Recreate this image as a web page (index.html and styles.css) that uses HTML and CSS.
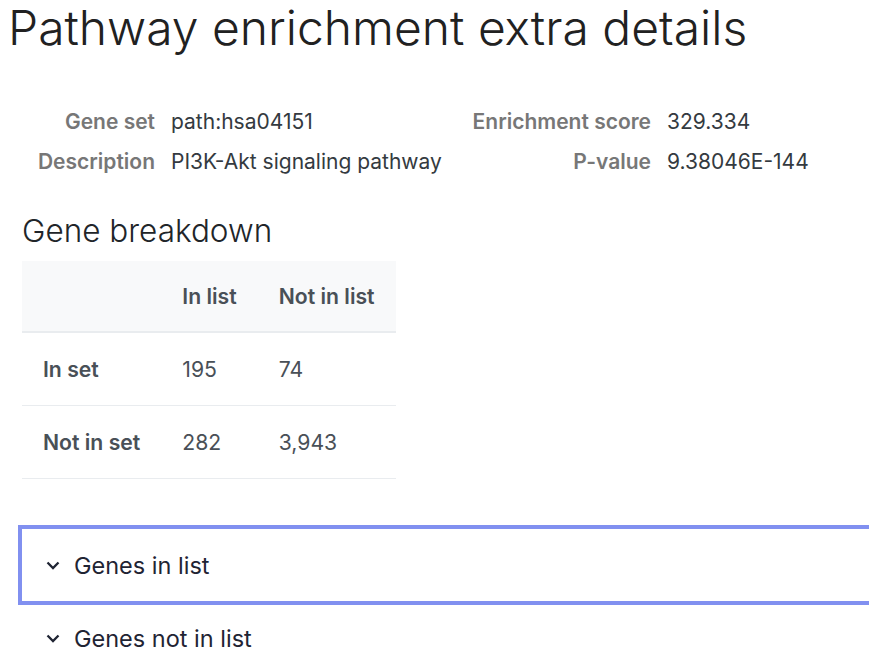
FILE: index.html
```html
<!DOCTYPE html>
<html lang="en">
<head>
<meta charset="utf-8">
<title>Pathway enrichment extra details</title>
<link rel="stylesheet" href="styles.css">
</head>
<body>
<div class="page">
  <h1 class="title">Pathway enrichment extra details</h1>

  <dl class="details">
    <dt>Gene set</dt><dd>path:hsa04151</dd>
    <dt>Enrichment score</dt><dd>329.334</dd>
    <dt>Description</dt><dd>PI3K-Akt signaling pathway</dd>
    <dt>P-value</dt><dd>9.38046E-144</dd>
  </dl>

  <section class="breakdown">
    <h2 class="subtitle">Gene breakdown</h2>
    <table class="matrix">
      <thead>
        <tr><th></th><th>In list</th><th>Not in list</th></tr>
      </thead>
      <tbody>
        <tr><th>In set</th><td>195</td><td>74</td></tr>
        <tr><th>Not in set</th><td>282</td><td>3,943</td></tr>
      </tbody>
    </table>
  </section>

  <div class="accordion">
    <div class="acc-item">
      <button class="acc-btn focused">
        <svg class="chev" width="14" height="9" viewBox="0 0 14 9"><polyline points="1.5,1.5 7,7 12.5,1.5" fill="none" stroke="#1f2433" stroke-width="2.3"/></svg>
        <span>Genes in list</span>
      </button>
    </div>
    <div class="acc-item">
      <button class="acc-btn">
        <svg class="chev" width="14" height="9" viewBox="0 0 14 9"><polyline points="1.5,1.5 7,7 12.5,1.5" fill="none" stroke="#1f2433" stroke-width="2.3"/></svg>
        <span>Genes not in list</span>
      </button>
    </div>
  </div>
</div>
</body>
</html>
```

FILE: styles.css
```css
html, body {
  margin: 0;
  padding: 0;
  background: #ffffff;
  overflow: hidden;
}

.page {
  width: 869px;
  font-family: "Inter", "Noto Sans", sans-serif;
  color: #343a40;
}

.title {
  margin: 0;
  padding-left: 8px;
  font-family: "Inter", "Noto Sans", sans-serif;
  font-weight: 300;
  font-size: 48px;
  line-height: 56px;
  color: #212121;
}

.details {
  margin: 46px 0 0 22px;
  display: grid;
  grid-template-columns: 133px 272px 192px auto;
  column-gap: 16px;
  font-size: 21px;
  line-height: 40px;
}

.details dt {
  text-align: right;
  font-weight: 600;
  color: #777777;
  white-space: nowrap;
}

.details dd {
  margin: 0;
  color: #343a40;
  white-space: nowrap;
}

.breakdown {
  margin: 29px 0 0 22px;
}

.subtitle {
  margin: 0;
  font-weight: 300;
  font-size: 31.5px;
  line-height: 40px;
  color: #212529;
}

.matrix {
  margin-top: 10px;
  border-collapse: collapse;
  font-size: 21.2px;
  color: #495057;
}

.matrix th,
.matrix td {
  padding: 24px 21px;
  text-align: left;
  line-height: 22px;
  white-space: nowrap;
}

.matrix thead th {
  background: #f8f9fa;
  font-weight: 600;
  border-bottom: 2px solid #e9ecef;
}

.matrix tbody th,
.matrix tbody td {
  line-height: 24px;
  border-bottom: 1px solid #e9ecef;
}

.matrix tbody th {
  font-weight: 600;
}

.accordion {
  margin: 50px 0 0 22px;
  width: 900px;
}

.acc-item {
  border-bottom: 1px solid #e5e7eb;
}

.acc-item:last-child {
  border-bottom: none;
}

.acc-btn {
  display: flex;
  align-items: center;
  gap: 14px;
  width: 100%;
  height: 72px;
  padding: 0 0 0 24px;
  border: none;
  background: #ffffff;
  font-family: "Inter", "Noto Sans", sans-serif;
  font-size: 23.5px;
  color: #1f2433;
  text-align: left;
}

.acc-btn.focused {
  outline: 4px solid #8190f0;
  outline-offset: 0;
}

.chev {
  display: block;
}
```
